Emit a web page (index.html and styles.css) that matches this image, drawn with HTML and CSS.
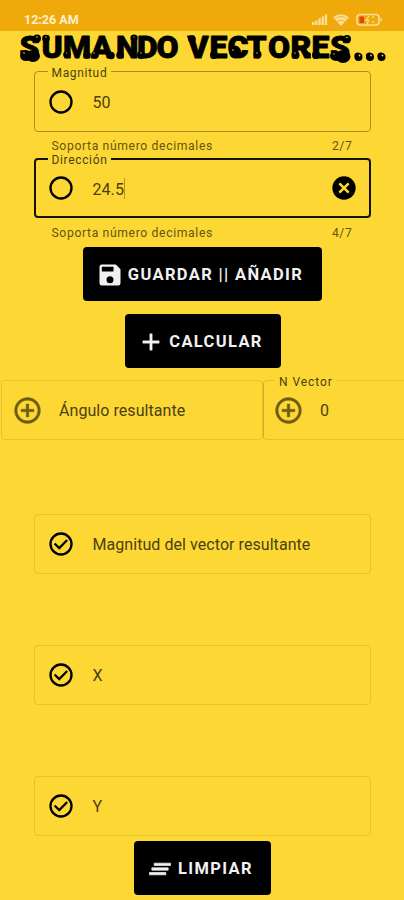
FILE: index.html
```
<!DOCTYPE html>
<html lang="es">
<head>
<meta charset="utf-8">
<meta name="viewport" content="width=device-width, initial-scale=1">
<title>Sumando vectores</title>
<link rel="stylesheet" href="styles.css">
</head>
<body>
<svg width="0" height="0" class="defs">
  <symbol id="ring" viewBox="0 0 24 24"><circle cx="12" cy="12" r="9" fill="none" stroke="currentColor" stroke-width="2"/></symbol>
  <symbol id="check" viewBox="0 0 24 24"><circle cx="12" cy="12" r="9" fill="none" stroke="currentColor" stroke-width="2"/><path d="M6.500 11.500l4 4 6.800-7" fill="none" stroke="currentColor" stroke-width="1.900"/></symbol>
  <symbol id="plus-ring" viewBox="0 0 24 24"><path d="M13 7h-2v4H7v2h4v4h2v-4h4v-2h-4V7zm-1-5C6.480 2 2 6.480 2 12s4.480 10 10 10 10-4.480 10-10S17.520 2 12 2zm0 18c-4.410 0-8-3.590-8-8s3.590-8 8-8 8 3.590 8 8-3.590 8-8 8z" fill="currentColor" stroke="currentColor" stroke-width=".3"/></symbol>
</svg>
<header class="status">
  <span class="time">12:26 AM</span>
  <svg class="signals" width="74" height="14" viewBox="0 0 74 14">
    <g fill="#fbe09a">
      <rect x="1" y="9" width="2.300" height="3"/><rect x="4.200" y="7.500" width="2.300" height="4.500"/><rect x="7.400" y="5.500" width="2.300" height="6.500"/><rect x="10.600" y="3.500" width="2.300" height="8.500"/><rect x="13.800" y="1.500" width="2.300" height="10.500"/>
      <path d="M22 4.500Q30-2 38 4.500L30 13z"/>
    </g>
    <path d="M23.500 6q6.500-5 13 0M26 8.500q4-3 8 0" fill="none" stroke="#f0a90b" stroke-width=".8"/>
    <rect x="46" y="1.500" width="22" height="10.500" rx="3" fill="none" stroke="#fbe09a" stroke-width="1.600"/>
    <rect x="48.500" y="3.500" width="4.500" height="6.500" fill="#e0480e"/>
    <path d="M58 3l-3 4.500h2.500L56 11M62 3v2M62 8v2" fill="none" stroke="#fbe09a" stroke-width="1.200"/>
    <path d="M69.500 4.500q3 2.200 0 4.500z" fill="#fbe09a"/>
  </svg>
</header>
<main>
  <svg class="title" width="404" height="40" viewBox="0 0 404 40">
    <g class="letters">
      <text y="27" x="19.500 41.500 63 91 116 137 156.500">SUMANDO</text>
      <text y="27" x="187.500 209.500 227.500 246.500 268 290.500 311.500 330 353 364.500 376">VECTORES...</text>
    </g>
    <g>
      <ellipse cx="26" cy="24.500" rx="6" ry="5.500"/><ellipse cx="33" cy="25" rx="7" ry="6"/><circle cx="37" cy="7.500" r="4"/>
      <circle cx="46" cy="7.500" r="3.800"/><circle cx="67" cy="23.500" r="3.800"/><circle cx="87" cy="24" r="3.800"/><circle cx="95" cy="24" r="3.800"/><circle cx="111" cy="24.500" r="3.800"/>
      <circle cx="120" cy="24" r="3.800"/><circle cx="134" cy="7" r="3.500"/><circle cx="141" cy="24" r="4"/><circle cx="192" cy="8" r="3.800"/>
      <circle cx="214" cy="24" r="4"/><ellipse cx="235" cy="21" rx="6" ry="6.500"/><circle cx="244" cy="10" r="3"/><circle cx="257.500" cy="23.500" r="4"/>
      <circle cx="295.500" cy="24" r="4"/><circle cx="308" cy="24" r="3"/><circle cx="316" cy="24" r="4"/>
      <ellipse cx="336" cy="25" rx="6" ry="5"/><ellipse cx="343" cy="25.500" rx="7.500" ry="6.500"/><circle cx="347" cy="8" r="4"/>
      <circle cx="358.500" cy="26" r="4"/><circle cx="370" cy="26" r="4"/><circle cx="381.500" cy="26" r="4"/>
    </g>
    <g fill="#fdd835">
      <circle cx="24" cy="22" r=".8"/><circle cx="37" cy="6" r=".8"/><circle cx="46" cy="6" r=".7"/><circle cx="66.500" cy="22" r=".6"/><circle cx="94" cy="22" r=".7"/><circle cx="134" cy="6" r=".6"/><circle cx="141" cy="22" r=".7"/>
      <circle cx="233" cy="19" r=".8"/><circle cx="257" cy="22" r=".7"/><circle cx="295" cy="22" r=".7"/><circle cx="347" cy="6.500" r=".8"/><circle cx="334" cy="23" r=".7"/>
      <circle cx="359.500" cy="24.500" r=".9"/><circle cx="371" cy="24.500" r=".9"/><circle cx="382.500" cy="24.500" r=".9"/>
    </g>
  </svg>

  <section class="input-group">
    <div class="field mid"><span class="label">Magnitud</span><svg class="icon"><use href="#ring"/></svg><span class="value">50</span></div>
    <div class="helper"><span>Soporta número decimales</span><span>2/7</span></div>
  </section>
  <section class="input-group">
    <div class="field focused"><span class="label">Dirección</span><svg class="icon"><use href="#ring"/></svg><span class="value">24.5</span><span class="caret"></span>
      <svg class="icon clear" viewBox="0 0 24 24"><circle cx="12" cy="12" r="10"/><path d="M8 8l8 8M16 8l-8 8" stroke="#fdd835" stroke-width="2.200"/></svg></div>
    <div class="helper"><span>Soporta número decimales</span><span>4/7</span></div>
  </section>

  <button class="btn save"><svg class="icon" viewBox="0 0 24 24"><path fill="currentColor" fill-rule="evenodd" d="M17 3H5a2 2 0 0 0-2 2v14a2 2 0 0 0 2 2h14a2 2 0 0 0 2-2V7zM12 19a3 3 0 1 1 0-6 3 3 0 0 1 0 6zM15 9H5V5h10z"/></svg><span>GUARDAR || AÑADIR</span></button>
  <button class="btn calc"><svg class="icon" viewBox="0 0 24 24"><path fill="currentColor" stroke="currentColor" stroke-width=".4" d="M19 13h-6v6h-2v-6H5v-2h6V5h2v6h6z"/></svg><span>CALCULAR</span></button>

  <div class="pair">
    <div class="field faint angle"><svg class="icon brown"><use href="#plus-ring"/></svg><span class="value">Ángulo resultante</span></div>
    <div class="field faint count"><span class="label">N Vector</span><svg class="icon brown"><use href="#plus-ring"/></svg><span class="value">0</span></div>
  </div>

  <div class="results">
    <div class="field faint"><svg class="icon"><use href="#check"/></svg><span class="value">Magnitud del vector resultante</span></div>
    <div class="field faint"><svg class="icon"><use href="#check"/></svg><span class="value">X</span></div>
    <div class="field faint"><svg class="icon"><use href="#check"/></svg><span class="value">Y</span></div>
  </div>
  <button class="btn wipe"><svg class="icon" viewBox="0 0 24 24"><path fill="currentColor" d="M5 13h14v-2H5zm-2 4h14v-2H3zM7 7v2h14V7z" stroke="currentColor" stroke-width=".6"/></svg><span>LIMPIAR</span></button>
</main>
</body>
</html>
```
FILE: styles.css
```
* { box-sizing: border-box; }
body {
  margin: 0;
  height: 900px;
  overflow: hidden;
  background: #fdd835;
  color: #000;
  font-family: Roboto, "Liberation Sans", sans-serif;
}
.defs { position: absolute; }
.status {
  height: 31px;
  padding: 9px 19px 0 24px;
  background: #f0a90b;
  display: flex;
  justify-content: space-between;
}
.time { color: #fdf0cc; font-size: 12.5px; line-height: 22px; font-weight: 700; }
.signals { margin: 4px 0 0; }
main { display: flex; flex-direction: column; align-items: center; }
.title { display: block; overflow: visible; }
.letters {
  font-family: Roboto, sans-serif;
  font-size: 32px;
  font-weight: 900;
  stroke: #000;
  stroke-width: .8px;
  stroke-linejoin: round;
}
.input-group { width: 337px; height: 87px; }
.field {
  position: relative;
  display: flex;
  align-items: center;
  height: 60px;
  padding-left: 12px;
  border: 1px solid #e5c12f;
  border-radius: 4px;
}
.field.mid { height: 61px; border-color: #a78f26; }
.field.focused { border: 2px solid #151204; padding-left: 11px; }
.label {
  position: absolute;
  top: -6px;
  left: 13px;
  padding: 0 4px;
  background: #fdd835;
  color: #4b400f;
  font-size: 12px;
  line-height: 14px;
  letter-spacing: .65px;
}
.focused .label { top: -7px; left: 12px; }
.count .label { left: 11px; letter-spacing: .95px; }
.icon { width: 28px; height: 28px; flex: none; }
.brown { color: #6e5c12; width: 31px; height: 31px; }
.value { margin: 1px 0 0 18px; color: #4b400f; font-size: 16px; letter-spacing: .06px; line-height: 20px; }
.input-group .value { margin-top: 3px; }
.caret { width: 1px; height: 21px; background: #d28c10; }
.clear { margin: 0 11px 0 auto; }
.helper {
  display: flex;
  justify-content: space-between;
  padding: 8px 18px 0;
  color: #65550f;
  font-size: 12.2px;
  line-height: 13px;
  letter-spacing: .63px;
}
.focused + .helper { padding-top: 9px; }
.btn {
  display: flex;
  align-items: center;
  justify-content: center;
  gap: 4px;
  padding: 1px 5px 0 0;
  height: 54px;
  border: 0;
  border-radius: 4px;
  background: #000;
  color: #f1f1f1;
  font: 700 16.5px/20px Roboto, sans-serif;
  letter-spacing: 1.35px;
}
.save { width: 239px; margin-top: 2px; }
.calc { width: 156px; margin: 13px 0 0 1px; }
.wipe { width: 137px; margin-top: 5px; }
.pair { display: flex; width: 404px; margin-top: 12px; padding-left: 1px; }
.angle { width: 262px; padding-left: 10px; }
.count { width: 141px; padding-left: 9px; border-left-color: #d2ae29; border-right: 0; border-radius: 4px 0 0 4px; }
.angle .value, .count .value { margin-left: 16px; }
.results { width: 337px; margin-top: 74px; display: flex; flex-direction: column; gap: 71px; }
```
